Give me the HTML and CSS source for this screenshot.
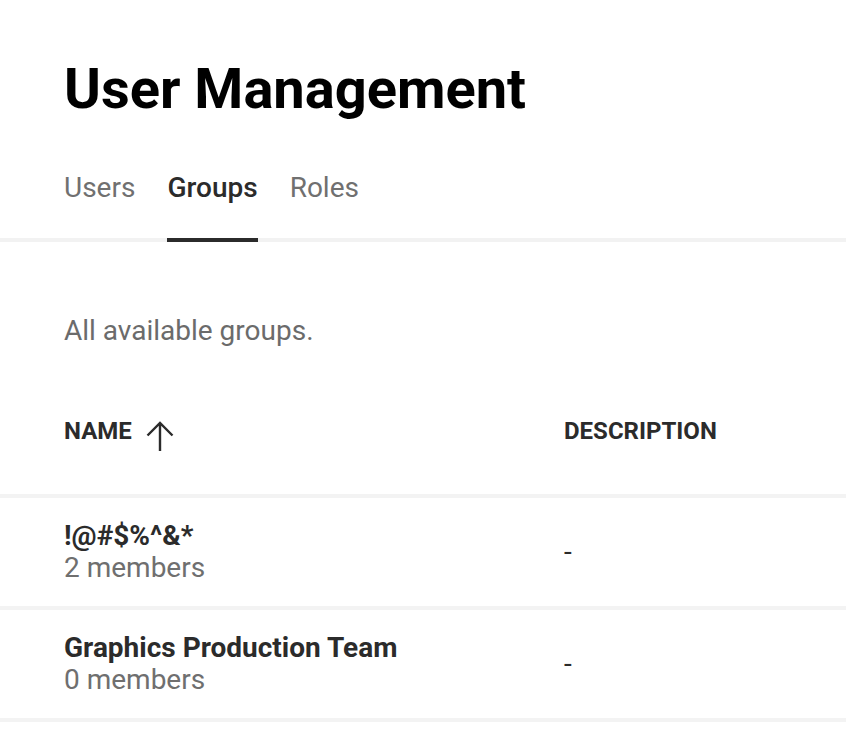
FILE: index.html
```html
<!DOCTYPE html>
<html lang="en">
<head>
<meta charset="utf-8">
<title>User Management</title>
<link rel="stylesheet" href="styles.css">
</head>
<body>
<main class="page">
  <h1 class="title">User Management</h1>
  <nav class="tabs">
    <a class="tab">Users</a>
    <a class="tab tab-active">Groups</a>
    <a class="tab">Roles</a>
  </nav>
  <p class="desc">All available groups.</p>
  <div class="table">
    <div class="row row-head">
      <div class="cell th th-name">
        <span>NAME</span>
        <svg class="sort-icon" viewBox="0 0 28 30" width="28" height="30" aria-hidden="true">
          <path d="M14 2 V30 M1.5 14.5 L14 2 L26.5 14.5" fill="none" stroke="#2b2b2b" stroke-width="2.4" stroke-linecap="butt" stroke-linejoin="miter"/>
        </svg>
      </div>
      <div class="cell th">DESCRIPTION</div>
    </div>
    <div class="row">
      <div class="cell">
        <div class="name">!@#$%^&amp;*</div>
        <div class="members">2 members</div>
      </div>
      <div class="cell dash">-</div>
    </div>
    <div class="row">
      <div class="cell">
        <div class="name">Graphics Production Team</div>
        <div class="members">0 members</div>
      </div>
      <div class="cell dash">-</div>
    </div>
  </div>
</main>
</body>
</html>
```
FILE: styles.css
```css
* { box-sizing: border-box; }

html, body {
  margin: 0;
  padding: 0;
  background: #ffffff;
}

body {
  font-family: Roboto, "Liberation Sans", Arial, sans-serif;
  color: #2b2b2b;
}

.page {
  padding-top: 57px;
}

.title {
  margin: 0 64px;
  font-size: 56px;
  line-height: 64px;
  font-weight: 700;
  color: #000000;
}

.tabs {
  margin-top: 51px;
  display: flex;
  gap: 32px;
  padding-left: 64px;
  border-bottom: 4px solid #f2f2f2;
}

.tab {
  font-size: 28px;
  line-height: 32px;
  color: #707070;
  padding-bottom: 34px;
  border-bottom: 4px solid transparent;
  margin-bottom: -4px;
}

.tab-active {
  color: #2b2b2b;
  font-weight: 500;
  border-bottom-color: #2b2b2b;
}

.desc {
  margin: 73px 64px 0;
  font-size: 28px;
  line-height: 32px;
  color: #6b6b6b;
}

.table {
  margin-top: 70px;
}

.row {
  display: grid;
  grid-template-columns: 500px 1fr;
  padding: 22px 64px;
  border-bottom: 4px solid #f3f3f3;
  align-items: center;
}

.row-head {
  padding-top: 0;
  padding-bottom: 49px;
}

.th {
  font-size: 24px;
  line-height: 28px;
  font-weight: 700;
  color: #2b2b2b;
}

.th-name {
  display: flex;
  align-items: center;
  gap: 14px;
  height: 28px;
}

.sort-icon {
  margin-top: 10px;
  flex: none;
}

.name {
  font-size: 28px;
  line-height: 32px;
  font-weight: 700;
  color: #2b2b2b;
}

.members {
  font-size: 28px;
  line-height: 32px;
  color: #6f6f6f;
}

.dash {
  font-size: 28px;
  line-height: 32px;
  color: #2b2b2b;
}
```
